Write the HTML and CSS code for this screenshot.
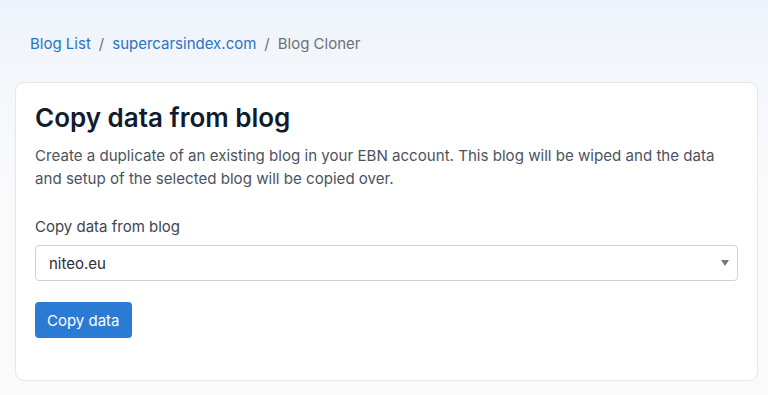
FILE: index.html
```html
<!DOCTYPE html>
<html lang="en">
<head>
    <meta charset="UTF-8">
    <meta name="viewport" content="width=device-width, initial-scale=1.0">
    <title>Blog Cloner</title>
    <link rel="stylesheet" href="styles.css">
</head>
<body>
    <div class="page">
        <nav class="crumbs">
            <a href="#">Blog List</a>
            <span class="sep">/</span>
            <a href="#">supercarsindex.com</a>
            <span class="sep">/</span>
            <span class="current">Blog Cloner</span>
        </nav>
        <div class="card">
            <h1>Copy data from blog</h1>
            <p class="lead">Create a duplicate of an existing blog in your EBN account. This blog will be wiped and the data and setup of the selected blog will be copied over.</p>
            <label class="label" for="blog">Copy data from blog</label>
            <div class="select">
                <span>niteo.eu</span>
                <svg width="8" height="6" viewBox="0 0 8 6"><path d="M0 0h8L4 6z" fill="#777"/></svg>
            </div>
            <button class="btn">Copy data</button>
        </div>
    </div>
</body>
</html>
```

FILE: styles.css
```css
* {
    margin: 0;
    padding: 0;
    box-sizing: border-box;
}
html, body {
    height: 100%;
}
body {
    font-family: Inter, "Noto Sans", sans-serif;
    background: linear-gradient(#eef3fb 0, #f5f7fb 90px, #fafafb 200px);
    color: #4a5361;
}
.page {
    padding: 34px 10px 0 15px;
}
.crumbs {
    font-size: 15px;
    line-height: 20px;
    padding-left: 15px;
    display: flex;
    gap: 8px;
    color: #6b7178;
}
.crumbs a {
    color: #2b73c4;
    text-decoration: none;
}
.card {
    margin-top: 28px;
    background: #fff;
    border: 1px solid #e4e6ea;
    border-radius: 9px;
    padding: 18px 19px 42px;
}
h1 {
    font-size: 26px;
    line-height: 34px;
    font-weight: 600;
    color: #101c2e;
}
.lead {
    margin-top: 9px;
    font-size: 15.1px;
    line-height: 23px;
    color: #4a5361;
}
.label {
    display: block;
    margin-top: 26px;
    font-size: 15px;
    line-height: 22px;
    color: #3e4550;
}
.select {
    margin-top: 7px;
    height: 36px;
    border: 1px solid #cfd2d6;
    border-radius: 4px;
    display: flex;
    align-items: center;
    justify-content: space-between;
    padding: 0 8px 0 13px;
    font-size: 15px;
    color: #2a2f36;
}
.btn {
    margin-top: 21px;
    height: 36px;
    padding: 0 12px;
    border: none;
    border-radius: 4px;
    background: #2a7bd4;
    color: #fff;
    font-family: inherit;
    font-size: 15px;
}
```
